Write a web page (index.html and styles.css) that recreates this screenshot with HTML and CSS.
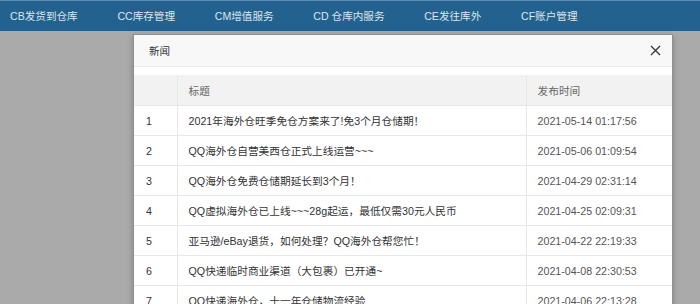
FILE: index.html
```html
<!DOCTYPE html>
<html lang="zh-CN">
<head>
<meta charset="utf-8">
<title>新闻</title>
<link rel="stylesheet" href="styles.css">
</head>
<body>
<nav class="topnav">
  <a class="nav-item">CB发货到仓库</a>
  <a class="nav-item">CC库存管理</a>
  <a class="nav-item">CM增值服务</a>
  <a class="nav-item">CD 仓库内服务</a>
  <a class="nav-item">CE发往库外</a>
  <a class="nav-item">CF账户管理</a>
</nav>
<div class="backdrop"></div>
<div class="modal">
  <div class="modal-header">
    <span class="modal-title">新闻</span>
    <button class="close" aria-label="关闭">
      <svg width="11" height="11" viewBox="0 0 11 11"><path d="M1 1L10 10M10 1L1 10" stroke="#333" stroke-width="1.3" fill="none"/></svg>
    </button>
  </div>
  <div class="modal-body">
    <table class="news">
      <colgroup><col class="c-num"><col class="c-title"><col class="c-time"></colgroup>
      <thead>
        <tr><th></th><th>标题</th><th>发布时间</th></tr>
      </thead>
      <tbody>
        <tr><td>1</td><td class="t">2021年海外仓旺季免仓方案来了!免3个月仓储期！</td><td class="d">2021-05-14 01:17:56</td></tr>
        <tr><td>2</td><td class="t">QQ海外仓自营美西仓正式上线运营~~~</td><td class="d">2021-05-06 01:09:54</td></tr>
        <tr><td>3</td><td class="t">QQ海外仓免费仓储期延长到3个月！</td><td class="d">2021-04-29 02:31:14</td></tr>
        <tr><td>4</td><td class="t">QQ虚拟海外仓已上线~~~28g起运，最低仅需30元人民币</td><td class="d">2021-04-25 02:09:31</td></tr>
        <tr><td>5</td><td class="t">亚马逊/eBay退货，如何处理？QQ海外仓帮您忙！</td><td class="d">2021-04-22 22:19:33</td></tr>
        <tr><td>6</td><td class="t">QQ快递临时商业渠道（大包裹）已开通~</td><td class="d">2021-04-08 22:30:53</td></tr>
        <tr><td>7</td><td class="t">QQ快递海外仓，十一年仓储物流经验</td><td class="d">2021-04-06 22:13:28</td></tr>
      </tbody>
    </table>
  </div>
</div>
</body>
</html>
```

FILE: styles.css
```css
html, body {
  margin: 0;
  padding: 0;
  height: 100%;
  overflow: hidden;
}
body {
  font-family: "Liberation Sans", "Noto Sans CJK SC", sans-serif;
  background: #aaaaaa;
  display: flex;
  flex-direction: column;
}
.topnav {
  height: 30px;
  border-top: 1px solid #5f8db2;
  background: #23628f;
  display: flex;
  align-items: center;
  padding-left: 10px;
  gap: 39.7px;
  flex: none;
}
.nav-item {
  color: #dde6ee;
  font-size: 10.6px;
  white-space: nowrap;
  line-height: 30px;
}
.backdrop {
  flex: 1;
  background: #aaaaaa;
}
.modal {
  position: absolute;
  left: 133px;
  top: 34px;
  width: 538px;
  background: #fff;
  border: 1px solid #8f8f8f;
  box-shadow: 0 2px 6px rgba(0,0,0,0.25);
}
.modal-header {
  height: 31px;
  background: #f8f8f8;
  border-bottom: 1px solid #ececec;
  display: flex;
  align-items: center;
  justify-content: space-between;
  padding: 0 11px 0 15px;
}
.modal-title {
  font-size: 10.6px;
  color: #333;
}
.close {
  border: 0;
  background: none;
  padding: 0;
  width: 11px;
  height: 11px;
  display: flex;
}
.modal-body {
  padding-top: 8px;
}
.news {
  width: 100%;
  border-collapse: collapse;
  font-size: 10.7px;
  color: #333;
}
.c-num { width: 43px; }
.c-title { width: 349px; }
.news th, .news td {
  text-align: left;
  font-weight: normal;
  border: 1px solid #e8e8e8;
  padding: 0 11px;
  white-space: nowrap;
}
.news tr > :first-child { border-left: 0; padding-left: 12px; }
.news tr > :last-child { border-right: 0; }
.news thead tr { border-top: 0; }
.news th {
  height: 30px;
  background: #f2f2f2;
  color: #666;
  border-top: 0;
}
.news td { height: 29px; }
.news td.d { color: #555; }
```
